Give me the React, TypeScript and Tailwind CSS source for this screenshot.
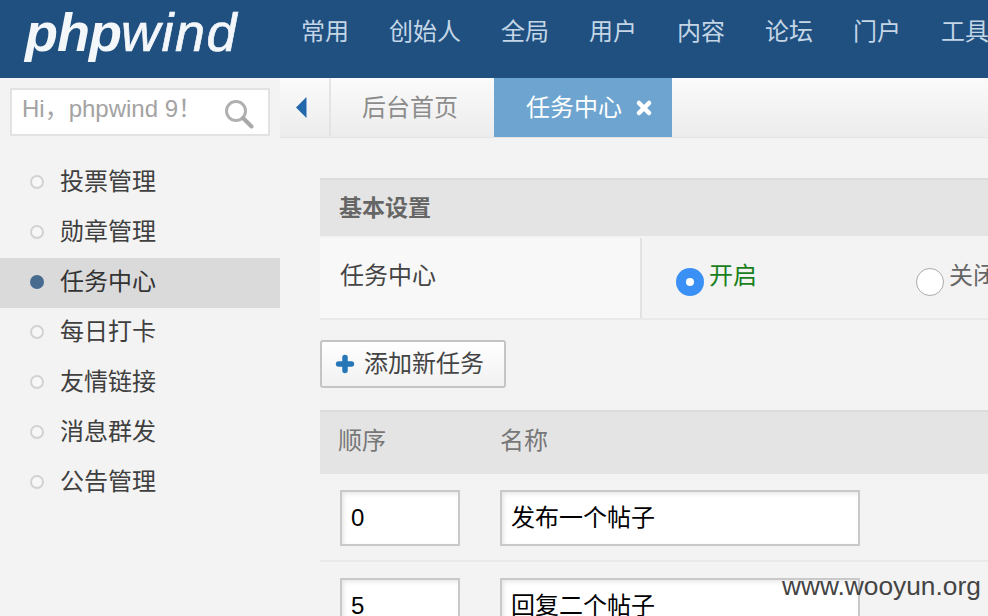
import { Plus, X } from "lucide-react";

const fontStack = "font-['Liberation_Sans','Noto_Sans_CJK_SC',sans-serif]";

const navItems = ["常用", "创始人", "全局", "用户", "内容", "论坛", "门户", "工具"];
const menuItems = ["投票管理", "勋章管理", "任务中心", "每日打卡", "友情链接", "消息群发", "公告管理"];

const TaskRow = ({ order, name }: { order: string; name: string }) => (
  <div className="flex h-[88px] shrink-0 gap-10 border-b-2 border-[#e9e9e9] px-5 pt-4">
    <div className="flex h-14 w-[120px] items-center border-2 border-[#c9c9c9] bg-white pl-[9px] text-2xl text-black shadow-[inset_2px_2px_4px_#e8e8e8]">
      {order}
    </div>
    <div className="flex h-14 w-[360px] items-center border-2 border-[#c9c9c9] bg-white pl-[9px] text-2xl text-black shadow-[inset_2px_2px_4px_#e8e8e8]">
      {name}
    </div>
  </div>
);

export default function App() {
  return (
    <div className={`relative flex h-[616px] w-[988px] flex-col overflow-hidden bg-[#f3f3f3] ${fontStack}`}>
      {/* Top bar */}
      <header className="flex h-[78px] shrink-0 items-center overflow-hidden bg-[#1f5080]">
        <div className="w-[301px] shrink-0 pb-[14px] pl-[25px] text-[54px] leading-none whitespace-nowrap text-[#f4f7fa] italic">
          <span className="font-bold tracking-[-1px]">php</span>
          <span className="font-normal tracking-[1.5px] [-webkit-text-stroke:0.7px_#f4f7fa]">wind</span>
        </div>
        <nav className="flex shrink-0 gap-10 pb-[14px] text-2xl whitespace-nowrap text-[#c4d6e6]">
          {navItems.map((item) => (
            <span key={item}>{item}</span>
          ))}
        </nav>
      </header>

      <div className="flex min-h-0 flex-1">
        {/* Sidebar */}
        <aside className="w-[280px] shrink-0">
          <div className="mx-2.5 mt-2.5 flex h-12 items-center justify-between border-2 border-[#e2e2e2] bg-white pr-[14px] pl-2.5 text-2xl text-[#a3a3a3]">
            <span className="pb-1.5 whitespace-nowrap">Hi，phpwind 9！</span>
            <svg className="mt-1 shrink-0" width="30" height="30" viewBox="0 0 30 30" fill="none">
              <circle cx="12" cy="12" r="9.5" stroke="#b0b0b0" strokeWidth="3" />
              <path d="M19 19L27.5 27.5" stroke="#a8a8a8" strokeWidth="4" strokeLinecap="round" />
            </svg>
          </div>
          <ul className="mt-[22px]">
            {menuItems.map((item) => {
              const active = item === "任务中心";
              return (
                <li
                  key={item}
                  className={`flex h-[50px] items-center gap-4 pb-0.5 pl-[30px] text-2xl ${
                    active ? "bg-[#dadada] text-[#333]" : "text-[#3f3f3f]"
                  }`}
                >
                  <span
                    className={
                      active
                        ? "h-[14px] w-[14px] rounded-full bg-[#466b8f]"
                        : "h-[14px] w-[14px] rounded-full border-2 border-[#d2d2d2] bg-[#f7f7f7]"
                    }
                  />
                  {item}
                </li>
              );
            })}
          </ul>
        </aside>

        <main className="min-w-0 flex-1">
          {/* Tabs */}
          <div className="flex h-[60px] border-b border-[#e4e4e4] bg-gradient-to-b from-[#fbfbfb] to-[#ececec]">
            <div className="flex w-[51px] items-center border-r-2 border-[#e4e4e4] pl-4">
              <svg width="11" height="21" viewBox="0 0 11 21">
                <path d="M10.5 0V21L0 10.5Z" fill="#2468ac" />
              </svg>
            </div>
            <div className="flex w-[163px] items-center pl-[31px] text-2xl text-[#8c8c8c]">后台首页</div>
            <div className="flex w-[178px] items-center gap-3 bg-[#6ea5d0] pl-8 text-2xl text-white">
              任务中心
              <X className="h-5 w-5" strokeWidth={5.5} />
            </div>
          </div>

          <div className="flex flex-col pt-10 pl-10">
            {/* Basic settings */}
            <div className="flex h-[58px] items-center border-t-2 border-[#dcdcdc] bg-[#e4e4e4] pl-[19px] text-[23px] font-bold text-[#666]">
              基本设置
            </div>
            <div className="mt-0.5 flex h-[82px] border-b-2 border-[#e9e9e9] bg-[#f3f3f3]">
              <div className="flex w-[320px] shrink-0 items-center bg-[#f8f8f8] pb-1 pl-5 text-2xl text-[#444]">任务中心</div>
              <div className="flex flex-1 items-center border-l-2 border-[#e2e2e2] pl-[34px] whitespace-nowrap">
                <span className="mt-2 flex h-7 w-7 shrink-0 items-center justify-center rounded-full bg-[#3a90f4]">
                  <span className="h-2 w-2 rounded-full bg-white" />
                </span>
                <span className="ml-[5px] pb-1 text-2xl text-[#1a7f1a]">开启</span>
                <span className="mt-2 ml-[159px] h-7 w-7 shrink-0 rounded-full border border-[#aaa] bg-white" />
                <span className="ml-[5px] pb-1 text-2xl text-[#666]">关闭</span>
              </div>
            </div>

            {/* Add task */}
            <button className="mt-5 flex h-12 w-[186px] items-center gap-2 rounded-[3px] border-2 border-[#c4c4c4] bg-gradient-to-b from-[#ffffff] to-[#f1f1f1] pl-3 text-2xl text-[#444]">
              <Plus className="h-[22px] w-[22px] text-[#2776b8]" strokeWidth={6} />
              添加新任务
            </button>

            {/* Task table */}
            <div className="mt-[22px] flex h-16 items-center gap-[114px] border-t-2 border-[#dcdcdc] bg-[#e4e4e4] pb-1 pl-[18px] text-2xl text-[#777]">
              <span>顺序</span>
              <span>名称</span>
            </div>
            <div className="flex flex-col">
              <TaskRow order="0" name="发布一个帖子" />
              <TaskRow order="5" name="回复二个帖子" />
            </div>
          </div>
        </main>
      </div>

      {/* Watermark */}
      <div className="absolute top-[571px] left-[782px] text-[26.3px] leading-[30px] whitespace-nowrap text-[#444]">
        www.wooyun.org
      </div>
    </div>
  );
}
